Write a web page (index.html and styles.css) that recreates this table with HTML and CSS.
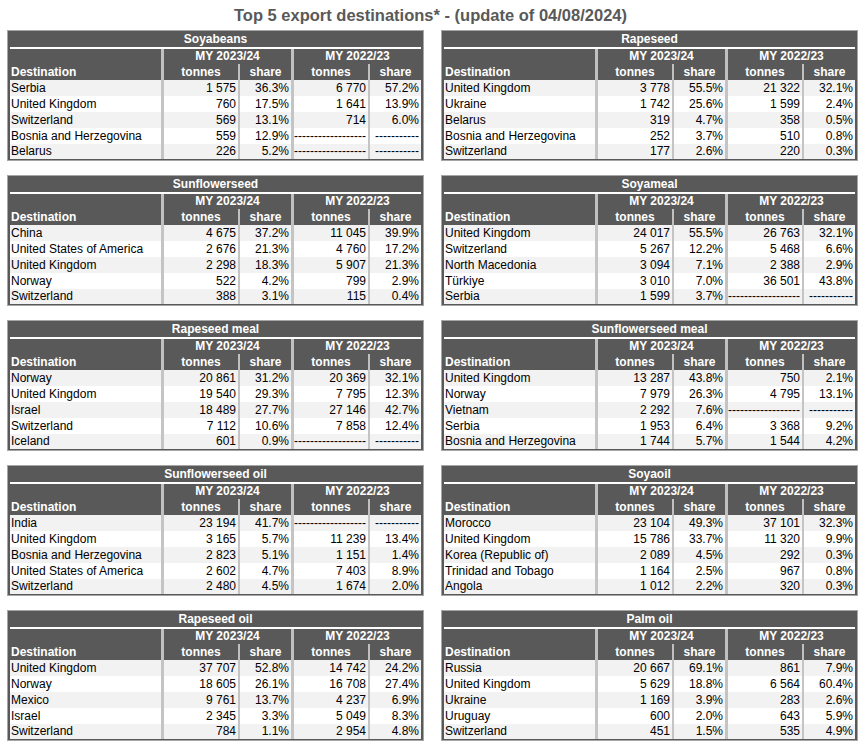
FILE: index.html
```html
<!DOCTYPE html>
<html lang="en">
<head>
<meta charset="utf-8">
<title>Top 5 export destinations</title>
<link rel="stylesheet" href="styles.css">
</head>
<body>
<h1 class="page-title">Top 5 export destinations* - (update of 04/08/2024)</h1>
<div class="grid">

<section class="tbl">
  <div class="ttl">Soyabeans</div>
  <div class="rule"></div>
  <div class="head"><div class="dest">Destination</div><div class="my">MY 2023/24</div><div class="my">MY 2022/23</div><div class="c">tonnes</div><div class="c s">share</div><div class="c">tonnes</div><div class="c s">share</div></div>
  <div class="row"><div class="d">Serbia</div><div class="n">1 575</div><div class="n s">36.3%</div><div class="n">6 770</div><div class="n s">57.2%</div></div>
  <div class="row"><div class="d">United Kingdom</div><div class="n">760</div><div class="n s">17.5%</div><div class="n">1 641</div><div class="n s">13.9%</div></div>
  <div class="row"><div class="d">Switzerland</div><div class="n">569</div><div class="n s">13.1%</div><div class="n">714</div><div class="n s">6.0%</div></div>
  <div class="row"><div class="d">Bosnia and Herzegovina</div><div class="n">559</div><div class="n s">12.9%</div><div class="n">------------------</div><div class="n s">-----------</div></div>
  <div class="row"><div class="d">Belarus</div><div class="n">226</div><div class="n s">5.2%</div><div class="n">------------------</div><div class="n s">-----------</div></div>
</section>

<section class="tbl">
  <div class="ttl">Rapeseed</div>
  <div class="rule"></div>
  <div class="head"><div class="dest">Destination</div><div class="my">MY 2023/24</div><div class="my">MY 2022/23</div><div class="c">tonnes</div><div class="c s">share</div><div class="c">tonnes</div><div class="c s">share</div></div>
  <div class="row"><div class="d">United Kingdom</div><div class="n">3 778</div><div class="n s">55.5%</div><div class="n">21 322</div><div class="n s">32.1%</div></div>
  <div class="row"><div class="d">Ukraine</div><div class="n">1 742</div><div class="n s">25.6%</div><div class="n">1 599</div><div class="n s">2.4%</div></div>
  <div class="row"><div class="d">Belarus</div><div class="n">319</div><div class="n s">4.7%</div><div class="n">358</div><div class="n s">0.5%</div></div>
  <div class="row"><div class="d">Bosnia and Herzegovina</div><div class="n">252</div><div class="n s">3.7%</div><div class="n">510</div><div class="n s">0.8%</div></div>
  <div class="row"><div class="d">Switzerland</div><div class="n">177</div><div class="n s">2.6%</div><div class="n">220</div><div class="n s">0.3%</div></div>
</section>

<section class="tbl">
  <div class="ttl">Sunflowerseed</div>
  <div class="rule"></div>
  <div class="head"><div class="dest">Destination</div><div class="my">MY 2023/24</div><div class="my">MY 2022/23</div><div class="c">tonnes</div><div class="c s">share</div><div class="c">tonnes</div><div class="c s">share</div></div>
  <div class="row"><div class="d">China</div><div class="n">4 675</div><div class="n s">37.2%</div><div class="n">11 045</div><div class="n s">39.9%</div></div>
  <div class="row"><div class="d">United States of America</div><div class="n">2 676</div><div class="n s">21.3%</div><div class="n">4 760</div><div class="n s">17.2%</div></div>
  <div class="row"><div class="d">United Kingdom</div><div class="n">2 298</div><div class="n s">18.3%</div><div class="n">5 907</div><div class="n s">21.3%</div></div>
  <div class="row"><div class="d">Norway</div><div class="n">522</div><div class="n s">4.2%</div><div class="n">799</div><div class="n s">2.9%</div></div>
  <div class="row"><div class="d">Switzerland</div><div class="n">388</div><div class="n s">3.1%</div><div class="n">115</div><div class="n s">0.4%</div></div>
</section>

<section class="tbl">
  <div class="ttl">Soyameal</div>
  <div class="rule"></div>
  <div class="head"><div class="dest">Destination</div><div class="my">MY 2023/24</div><div class="my">MY 2022/23</div><div class="c">tonnes</div><div class="c s">share</div><div class="c">tonnes</div><div class="c s">share</div></div>
  <div class="row"><div class="d">United Kingdom</div><div class="n">24 017</div><div class="n s">55.5%</div><div class="n">26 763</div><div class="n s">32.1%</div></div>
  <div class="row"><div class="d">Switzerland</div><div class="n">5 267</div><div class="n s">12.2%</div><div class="n">5 468</div><div class="n s">6.6%</div></div>
  <div class="row"><div class="d">North Macedonia</div><div class="n">3 094</div><div class="n s">7.1%</div><div class="n">2 388</div><div class="n s">2.9%</div></div>
  <div class="row"><div class="d">Türkiye</div><div class="n">3 010</div><div class="n s">7.0%</div><div class="n">36 501</div><div class="n s">43.8%</div></div>
  <div class="row"><div class="d">Serbia</div><div class="n">1 599</div><div class="n s">3.7%</div><div class="n">------------------</div><div class="n s">-----------</div></div>
</section>

<section class="tbl">
  <div class="ttl">Rapeseed meal</div>
  <div class="rule"></div>
  <div class="head"><div class="dest">Destination</div><div class="my">MY 2023/24</div><div class="my">MY 2022/23</div><div class="c">tonnes</div><div class="c s">share</div><div class="c">tonnes</div><div class="c s">share</div></div>
  <div class="row"><div class="d">Norway</div><div class="n">20 861</div><div class="n s">31.2%</div><div class="n">20 369</div><div class="n s">32.1%</div></div>
  <div class="row"><div class="d">United Kingdom</div><div class="n">19 540</div><div class="n s">29.3%</div><div class="n">7 795</div><div class="n s">12.3%</div></div>
  <div class="row"><div class="d">Israel</div><div class="n">18 489</div><div class="n s">27.7%</div><div class="n">27 146</div><div class="n s">42.7%</div></div>
  <div class="row"><div class="d">Switzerland</div><div class="n">7 112</div><div class="n s">10.6%</div><div class="n">7 858</div><div class="n s">12.4%</div></div>
  <div class="row"><div class="d">Iceland</div><div class="n">601</div><div class="n s">0.9%</div><div class="n">------------------</div><div class="n s">-----------</div></div>
</section>

<section class="tbl">
  <div class="ttl">Sunflowerseed meal</div>
  <div class="rule"></div>
  <div class="head"><div class="dest">Destination</div><div class="my">MY 2023/24</div><div class="my">MY 2022/23</div><div class="c">tonnes</div><div class="c s">share</div><div class="c">tonnes</div><div class="c s">share</div></div>
  <div class="row"><div class="d">United Kingdom</div><div class="n">13 287</div><div class="n s">43.8%</div><div class="n">750</div><div class="n s">2.1%</div></div>
  <div class="row"><div class="d">Norway</div><div class="n">7 979</div><div class="n s">26.3%</div><div class="n">4 795</div><div class="n s">13.1%</div></div>
  <div class="row"><div class="d">Vietnam</div><div class="n">2 292</div><div class="n s">7.6%</div><div class="n">------------------</div><div class="n s">-----------</div></div>
  <div class="row"><div class="d">Serbia</div><div class="n">1 953</div><div class="n s">6.4%</div><div class="n">3 368</div><div class="n s">9.2%</div></div>
  <div class="row"><div class="d">Bosnia and Herzegovina</div><div class="n">1 744</div><div class="n s">5.7%</div><div class="n">1 544</div><div class="n s">4.2%</div></div>
</section>

<section class="tbl">
  <div class="ttl">Sunflowerseed oil</div>
  <div class="rule"></div>
  <div class="head"><div class="dest">Destination</div><div class="my">MY 2023/24</div><div class="my">MY 2022/23</div><div class="c">tonnes</div><div class="c s">share</div><div class="c">tonnes</div><div class="c s">share</div></div>
  <div class="row"><div class="d">India</div><div class="n">23 194</div><div class="n s">41.7%</div><div class="n">------------------</div><div class="n s">-----------</div></div>
  <div class="row"><div class="d">United Kingdom</div><div class="n">3 165</div><div class="n s">5.7%</div><div class="n">11 239</div><div class="n s">13.4%</div></div>
  <div class="row"><div class="d">Bosnia and Herzegovina</div><div class="n">2 823</div><div class="n s">5.1%</div><div class="n">1 151</div><div class="n s">1.4%</div></div>
  <div class="row"><div class="d">United States of America</div><div class="n">2 602</div><div class="n s">4.7%</div><div class="n">7 403</div><div class="n s">8.9%</div></div>
  <div class="row"><div class="d">Switzerland</div><div class="n">2 480</div><div class="n s">4.5%</div><div class="n">1 674</div><div class="n s">2.0%</div></div>
</section>

<section class="tbl">
  <div class="ttl">Soyaoil</div>
  <div class="rule"></div>
  <div class="head"><div class="dest">Destination</div><div class="my">MY 2023/24</div><div class="my">MY 2022/23</div><div class="c">tonnes</div><div class="c s">share</div><div class="c">tonnes</div><div class="c s">share</div></div>
  <div class="row"><div class="d">Morocco</div><div class="n">23 104</div><div class="n s">49.3%</div><div class="n">37 101</div><div class="n s">32.3%</div></div>
  <div class="row"><div class="d">United Kingdom</div><div class="n">15 786</div><div class="n s">33.7%</div><div class="n">11 320</div><div class="n s">9.9%</div></div>
  <div class="row"><div class="d">Korea (Republic of)</div><div class="n">2 089</div><div class="n s">4.5%</div><div class="n">292</div><div class="n s">0.3%</div></div>
  <div class="row"><div class="d">Trinidad and Tobago</div><div class="n">1 164</div><div class="n s">2.5%</div><div class="n">967</div><div class="n s">0.8%</div></div>
  <div class="row"><div class="d">Angola</div><div class="n">1 012</div><div class="n s">2.2%</div><div class="n">320</div><div class="n s">0.3%</div></div>
</section>

<section class="tbl">
  <div class="ttl">Rapeseed oil</div>
  <div class="rule"></div>
  <div class="head"><div class="dest">Destination</div><div class="my">MY 2023/24</div><div class="my">MY 2022/23</div><div class="c">tonnes</div><div class="c s">share</div><div class="c">tonnes</div><div class="c s">share</div></div>
  <div class="row"><div class="d">United Kingdom</div><div class="n">37 707</div><div class="n s">52.8%</div><div class="n">14 742</div><div class="n s">24.2%</div></div>
  <div class="row"><div class="d">Norway</div><div class="n">18 605</div><div class="n s">26.1%</div><div class="n">16 708</div><div class="n s">27.4%</div></div>
  <div class="row"><div class="d">Mexico</div><div class="n">9 761</div><div class="n s">13.7%</div><div class="n">4 237</div><div class="n s">6.9%</div></div>
  <div class="row"><div class="d">Israel</div><div class="n">2 345</div><div class="n s">3.3%</div><div class="n">5 049</div><div class="n s">8.3%</div></div>
  <div class="row"><div class="d">Switzerland</div><div class="n">784</div><div class="n s">1.1%</div><div class="n">2 954</div><div class="n s">4.8%</div></div>
</section>

<section class="tbl">
  <div class="ttl">Palm oil</div>
  <div class="rule"></div>
  <div class="head"><div class="dest">Destination</div><div class="my">MY 2023/24</div><div class="my">MY 2022/23</div><div class="c">tonnes</div><div class="c s">share</div><div class="c">tonnes</div><div class="c s">share</div></div>
  <div class="row"><div class="d">Russia</div><div class="n">20 667</div><div class="n s">69.1%</div><div class="n">861</div><div class="n s">7.9%</div></div>
  <div class="row"><div class="d">United Kingdom</div><div class="n">5 629</div><div class="n s">18.8%</div><div class="n">6 564</div><div class="n s">60.4%</div></div>
  <div class="row"><div class="d">Ukraine</div><div class="n">1 169</div><div class="n s">3.9%</div><div class="n">283</div><div class="n s">2.6%</div></div>
  <div class="row"><div class="d">Uruguay</div><div class="n">600</div><div class="n s">2.0%</div><div class="n">643</div><div class="n s">5.9%</div></div>
  <div class="row"><div class="d">Switzerland</div><div class="n">451</div><div class="n s">1.5%</div><div class="n">535</div><div class="n s">4.9%</div></div>
</section>

</div>
</body>
</html>
```

FILE: styles.css
```css
* { box-sizing: border-box; }

html, body {
  margin: 0;
  padding: 0;
  background: #ffffff;
  font-family: "Liberation Sans", Arial, sans-serif;
}

.page-title {
  margin: 0;
  height: 30px;
  padding-top: 6px;
  font-size: 16.5px;
  line-height: 19px;
  font-weight: bold;
  color: #595959;
  text-align: center;
}

.grid {
  display: grid;
  grid-template-columns: 417px 417px;
  column-gap: 17px;
  row-gap: 14px;
  padding-left: 7px;
}

.tbl {
  width: 417px;
  border: 1px solid #a6a6a6;
  background: #595959;
  padding: 0 2px 1px 2px;
  font-size: 12px;
}

.ttl {
  height: 16px;
  line-height: 16px;
  text-align: center;
  color: #ffffff;
  font-weight: bold;
  white-space: nowrap;
}

.rule {
  height: 2px;
  background: #ffffff;
}

.head {
  display: grid;
  grid-template-columns: 151px 77px 53px 77px 53px;
  grid-template-rows: 15px 16px;
  color: #ffffff;
  font-weight: bold;
  white-space: nowrap;
}

.head .dest {
  grid-row: 1 / 3;
  align-self: end;
  line-height: 16px;
  padding-left: 1px;
}

.head .my {
  grid-column: span 2;
  border-left: 3px solid #c0c0c0;
  text-align: center;
  line-height: 15px;
}

.head .c {
  border-left: 3px solid #c0c0c0;
  text-align: center;
  line-height: 16px;
}

.head .c.s {
  border-left-width: 2px;
}

.row {
  display: grid;
  grid-template-columns: 151px 77px 53px 77px 53px;
  height: 16px;
  line-height: 16px;
  background: #ffffff;
  color: #000000;
  white-space: nowrap;
}

.row:nth-child(even) {
  background: #f2f2f2;
}

.row:last-child {
  height: 15px;
  line-height: 15px;
}

.row .d {
  padding-left: 1px;
  overflow: hidden;
}

.row .n {
  border-left: 3px solid #c4c4c4;
  text-align: right;
  padding-right: 2px;
  overflow: hidden;
}

.row .n.s {
  border-left-width: 2px;
}
```
